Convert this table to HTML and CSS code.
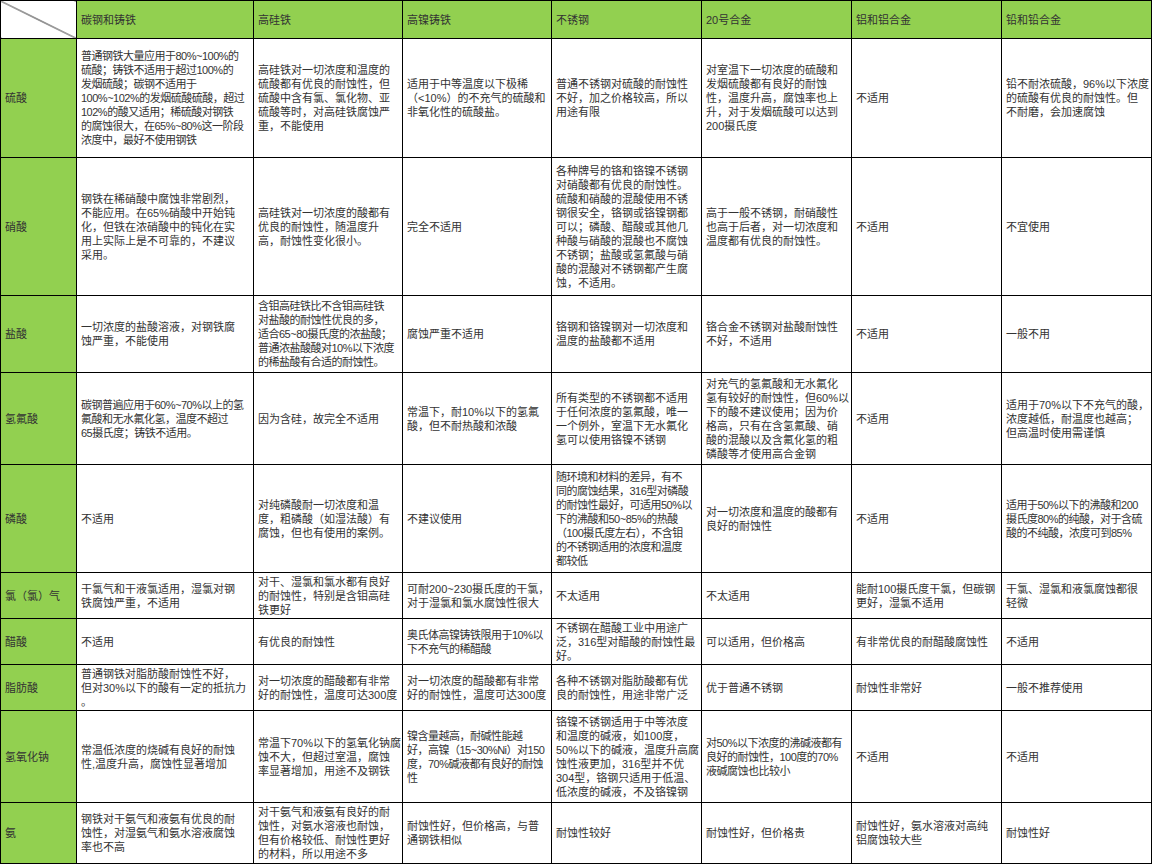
FILE: index.html
```html
<!DOCTYPE html>
<html lang="zh-CN">
<head>
<meta charset="utf-8">
<title>材料耐腐蚀性对照表</title>
<link rel="stylesheet" href="styles.css">
</head>
<body>
<table class="grid">
  <colgroup>
    <col class="c-label">
    <col class="c-wide">
    <col class="c-narrow">
    <col class="c-narrow">
    <col class="c-std">
    <col class="c-std">
    <col class="c-std">
    <col class="c-std">
  </colgroup>
  <thead>
    <tr class="r-head">
      <th class="corner"></th>
      <th>碳钢和铸铁</th>
      <th>高硅铁</th>
      <th>高镍铸铁</th>
      <th>不锈钢</th>
      <th>20号合金</th>
      <th>铝和铝合金</th>
      <th>铅和铅合金</th>
    </tr>
  </thead>
  <tbody>
    <tr class="r-1">
      <th>硫酸</th>
      <td class="tight">普通钢铁大量应用于80%~100%的<br>硫酸；铸铁不适用于超过100%的<br>发烟硫酸；碳钢不适用于<br>100%~102%的发烟硫酸硫酸，超过<br>102%的酸又适用；稀硫酸对钢铁<br>的腐蚀很大，在65%~80%这一阶段<br>浓度中，最好不使用钢铁</td>
      <td>高硅铁对一切浓度和温度的<br>硫酸都有优良的耐蚀性，但<br>硫酸中含有氯、氯化物、亚<br>硫酸等时，对高硅铁腐蚀严<br>重，不能使用</td>
      <td>适用于中等温度以下极稀<br>（&lt;10%）的不充气的硫酸和<br>非氧化性的硫酸盐。</td>
      <td>普通不锈钢对硫酸的耐蚀性<br>不好，加之价格较高，所以<br>用途有限</td>
      <td>对室温下一切浓度的硫酸和<br>发烟硫酸都有良好的耐蚀<br>性，温度升高，腐蚀率也上<br>升，对于发烟硫酸可以达到<br>200摄氏度</td>
      <td>不适用</td>
      <td>铅不耐浓硫酸，96%以下浓度<br>的硫酸有优良的耐蚀性。但<br>不耐磨，会加速腐蚀</td>
    </tr>
    <tr class="r-2">
      <th>硝酸</th>
      <td>钢铁在稀硝酸中腐蚀非常剧烈，<br>不能应用。在65%硝酸中开始钝<br>化，但铁在浓硝酸中的钝化在实<br>用上实际上是不可靠的，不建议<br>采用。</td>
      <td>高硅铁对一切浓度的酸都有<br>优良的耐蚀性，随温度升<br>高，耐蚀性变化很小。</td>
      <td>完全不适用</td>
      <td>各种牌号的铬和铬镍不锈钢<br>对硝酸都有优良的耐蚀性。<br>硫酸和硝酸的混酸使用不锈<br>钢很安全，铬钢或铬镍钢都<br>可以；磷酸、醋酸或其他几<br>种酸与硝酸的混酸也不腐蚀<br>不锈钢；盐酸或氢氟酸与硝<br>酸的混酸对不锈钢都产生腐<br>蚀，不适用。</td>
      <td>高于一般不锈钢，耐硝酸性<br>也高于后者，对一切浓度和<br>温度都有优良的耐蚀性。</td>
      <td>不适用</td>
      <td>不宜使用</td>
    </tr>
    <tr class="r-3">
      <th>盐酸</th>
      <td>一切浓度的盐酸溶液，对钢铁腐<br>蚀严重，不能使用</td>
      <td class="tight">含钼高硅铁比不含钼高硅铁<br>对盐酸的耐蚀性优良的多，<br>适合65~80摄氏度的浓盐酸；<br>普通浓盐酸酸对10%以下浓度<br>的稀盐酸有合适的耐蚀性。</td>
      <td>腐蚀严重不适用</td>
      <td>铬钢和铬镍钢对一切浓度和<br>温度的盐酸都不适用</td>
      <td>铬合金不锈钢对盐酸耐蚀性<br>不好，不适用</td>
      <td>不适用</td>
      <td>一般不用</td>
    </tr>
    <tr class="r-4">
      <th>氢氟酸</th>
      <td class="tight">碳钢普遍应用于60%~70%以上的氢<br>氟酸和无水氟化氢，温度不超过<br>65摄氏度；铸铁不适用。</td>
      <td>因为含硅，故完全不适用</td>
      <td>常温下，耐10%以下的氢氟<br>酸，但不耐热酸和浓酸</td>
      <td>所有类型的不锈钢都不适用<br>于任何浓度的氢氟酸，唯一<br>一个例外，室温下无水氟化<br>氢可以使用铬镍不锈钢</td>
      <td>对充气的氢氟酸和无水氟化<br>氢有较好的耐蚀性，但60%以<br>下的酸不建议使用；因为价<br>格高，只有在含氢氟酸、硝<br>酸的混酸以及含氟化氢的粗<br>磷酸等才使用高合金钢</td>
      <td>不适用</td>
      <td>适用于70%以下不充气的酸，<br>浓度越低，耐温度也越高；<br>但高温时使用需谨慎</td>
    </tr>
    <tr class="r-5">
      <th>磷酸</th>
      <td>不适用</td>
      <td>对纯磷酸耐一切浓度和温<br>度，粗磷酸（如湿法酸）有<br>腐蚀，但也有使用的案例。</td>
      <td>不建议使用</td>
      <td class="tight">随环境和材料的差异，有不<br>同的腐蚀结果，316型对磷酸<br>的耐蚀性最好，可适用50%以<br>下的沸酸和50~85%的热酸<br>（100摄氏度左右），不含钼<br>的不锈钢适用的浓度和温度<br>都较低</td>
      <td>对一切浓度和温度的酸都有<br>良好的耐蚀性</td>
      <td>不适用</td>
      <td class="tight">适用于50%以下的沸酸和200<br>摄氏度80%的纯酸，对于含硫<br>酸的不纯酸，浓度可到85%</td>
    </tr>
    <tr class="r-6">
      <th>氯（氯）气</th>
      <td>干氯气和干液氯适用，湿氯对钢<br>铁腐蚀严重，不适用</td>
      <td>对干、湿氯和氯水都有良好<br>的耐蚀性，特别是含钼高硅<br>铁更好</td>
      <td>可耐200~230摄氏度的干氯，<br>对于湿氯和氯水腐蚀性很大</td>
      <td>不太适用</td>
      <td>不太适用</td>
      <td>能耐100摄氏度干氯，但碳钢<br>更好，湿氯不适用</td>
      <td>干氯、湿氯和液氯腐蚀都很<br>轻微</td>
    </tr>
    <tr class="r-7">
      <th>醋酸</th>
      <td>不适用</td>
      <td>有优良的耐蚀性</td>
      <td class="tight">奥氏体高镍铸铁限用于10%以<br>下不充气的稀醋酸</td>
      <td>不锈钢在醋酸工业中用途广<br>泛，316型对醋酸的耐蚀性最<br>好。</td>
      <td>可以适用，但价格高</td>
      <td>有非常优良的耐醋酸腐蚀性</td>
      <td>不适用</td>
    </tr>
    <tr class="r-8">
      <th>脂肪酸</th>
      <td>普通钢铁对脂肪酸耐蚀性不好，<br>但对30%以下的酸有一定的抵抗力<br>。</td>
      <td>对一切浓度的醋酸都有非常<br>好的耐蚀性，温度可达300度</td>
      <td>对一切浓度的醋酸都有非常<br>好的耐蚀性，温度可达300度</td>
      <td>各种不锈钢对脂肪酸都有优<br>良的耐蚀性，用途非常广泛</td>
      <td>优于普通不锈钢</td>
      <td>耐蚀性非常好</td>
      <td>一般不推荐使用</td>
    </tr>
    <tr class="r-9">
      <th>氢氧化钠</th>
      <td>常温低浓度的烧碱有良好的耐蚀<br>性,温度升高，腐蚀性显著增加</td>
      <td>常温下70%以下的氢氧化钠腐<br>蚀不大，但超过室温，腐蚀<br>率显著增加，用途不及钢铁</td>
      <td class="tight">镍含量越高，耐碱性能越<br>好，高镍（15~30%Ni）对150<br>度，70%碱液都有良好的耐蚀<br>性</td>
      <td>铬镍不锈钢适用于中等浓度<br>和温度的碱液，如100度，<br>50%以下的碱液，温度升高腐<br>蚀性液更加，316型并不优<br>304型，铬钢只适用于低温、<br>低浓度的碱液，不及铬镍钢</td>
      <td class="tight">对50%以下浓度的沸碱液都有<br>良好的耐蚀性，100度的70%<br>液碱腐蚀也比较小</td>
      <td>不适用</td>
      <td>不适用</td>
    </tr>
    <tr class="r-10">
      <th>氨</th>
      <td>钢铁对干氨气和液氨有优良的耐<br>蚀性，对湿氨气和氨水溶液腐蚀<br>率也不高</td>
      <td>对干氨气和液氨有良好的耐<br>蚀性，对氨水溶液也耐蚀，<br>但有价格较低、耐蚀性更好<br>的材料，所以用途不多</td>
      <td>耐蚀性好，但价格高，与普<br>通钢铁相似</td>
      <td>耐蚀性较好</td>
      <td>耐蚀性好，但价格贵</td>
      <td>耐蚀性好，氨水溶液对高纯<br>铝腐蚀较大些</td>
      <td>耐蚀性好</td>
    </tr>
  </tbody>
</table>
</body>
</html>
```

FILE: styles.css
```css
html, body {
  margin: 0;
  padding: 0;
  background: #ffffff;
}

.grid {
  width: 1152px;
  table-layout: fixed;
  border-collapse: collapse;
  font-family: "Liberation Sans", "Noto Sans CJK SC", sans-serif;
  font-size: 11px;
  line-height: 14px;
  color: #333333;
}

.c-label { width: 76px; }
.c-wide { width: 177px; }
.c-narrow { width: 149px; }
.c-std { width: 150px; }

.grid th,
.grid td {
  border: 1px solid #000000;
  padding: 0 2px 0 4px;
  text-align: left;
  vertical-align: middle;
  font-weight: normal;
  white-space: nowrap;
  overflow: hidden;
}

.grid .tight {
  letter-spacing: -0.5px;
}

.grid thead th,
.grid tbody th {
  background: #92d050;
}

.grid td {
  background: #ffffff;
}

.grid .corner {
  background: #ffffff linear-gradient(to top right,
    transparent calc(50% - 0.7px),
    #000000 50%,
    transparent calc(50% + 0.7px));
}

.r-head { height: 38px; }
.r-1 { height: 119px; }
.r-2 { height: 138px; }
.r-3 { height: 77px; }
.r-4 { height: 92px; }
.r-5 { height: 108px; }
.r-6 { height: 46px; }
.r-7 { height: 46px; }
.r-8 { height: 46px; }
.r-9 { height: 92px; }
.r-10 { height: 61px; }
```
